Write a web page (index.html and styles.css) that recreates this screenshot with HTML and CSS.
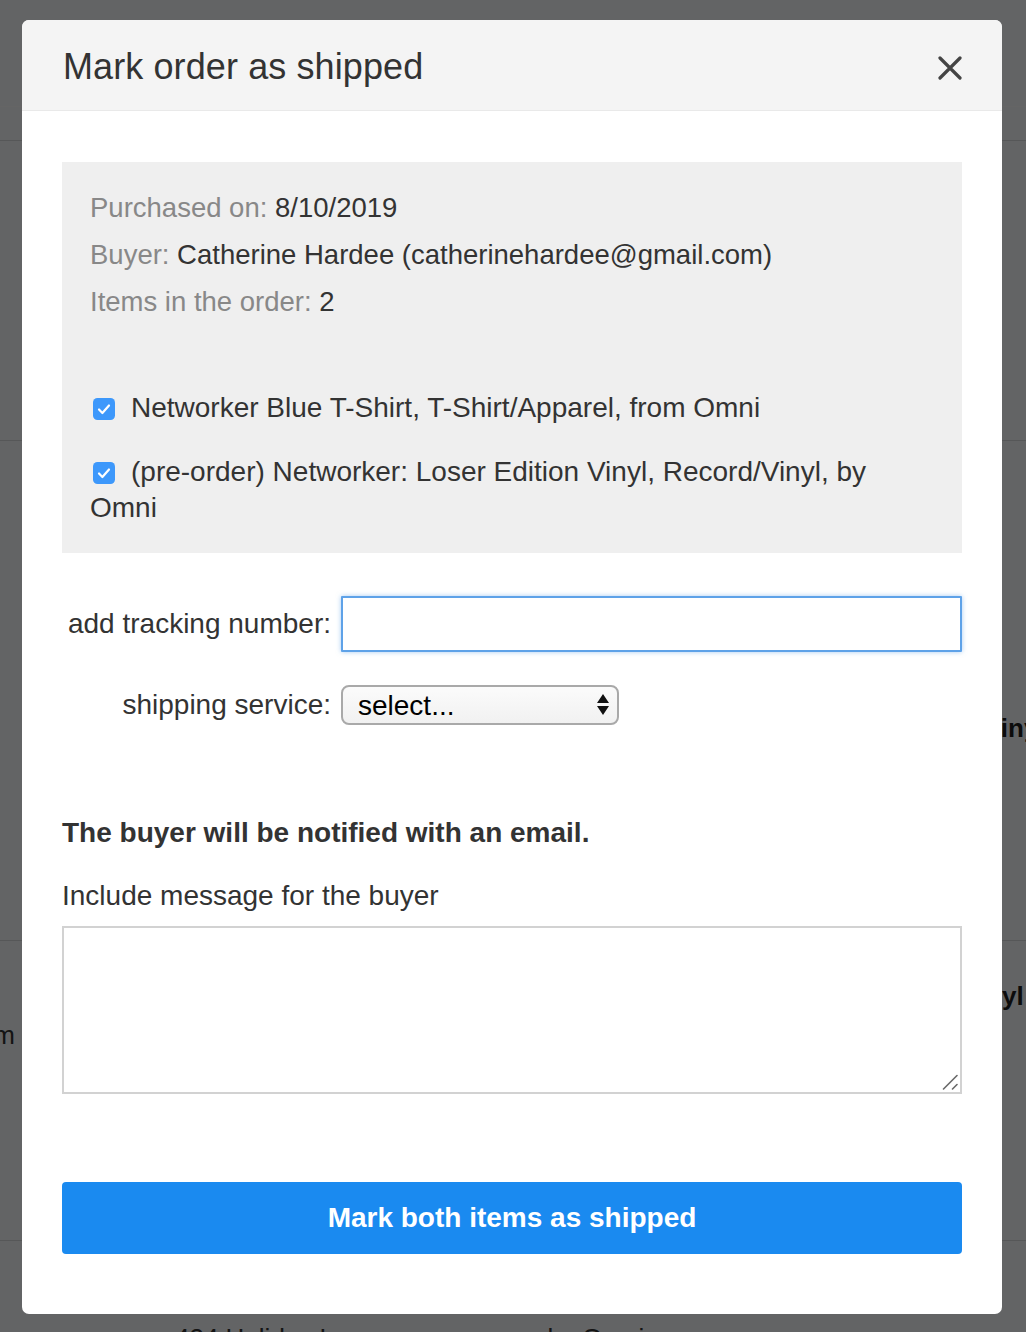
FILE: index.html
```html
<!DOCTYPE html>
<html lang="en">
<head>
<meta charset="utf-8">
<title>Mark order as shipped</title>
<link rel="stylesheet" href="styles.css">
</head>
<body>
<div class="page">
  <div class="page-top"></div>
  <div class="page-sub"></div>
  <div class="page-row r1"></div>
  <div class="page-row r2"><span class="bg-text bold vinyl1">Vinyl</span></div>
  <div class="page-row r3">
    <div class="bg-left"><span class="bg-text">from</span></div>
    <span class="bg-text bold vinyl2">Vinyl</span>
  </div>
  <div class="page-row r4"><span class="bg-text addr">434 Holiday Lane</span><span class="bg-text by">by Omni</span></div>
</div>
<div class="overlay"></div>

<div class="modal">
  <div class="modal-header">
    <h1 class="modal-title">Mark order as shipped</h1>
    <button class="close" aria-label="Close">
      <svg width="24" height="24" viewBox="0 0 24 24"><path d="M2 2 L22 22 M22 2 L2 22" stroke="#444" stroke-width="3.2" stroke-linecap="round"/></svg>
    </button>
  </div>
  <div class="modal-body">
    <div class="info">
      <p class="info-line"><span class="lbl">Purchased on:</span> 8/10/2019</p>
      <p class="info-line"><span class="lbl">Buyer:</span> Catherine Hardee (catherinehardee@gmail.com)</p>
      <p class="info-line"><span class="lbl">Items in the order:</span> 2</p>
      <div class="items">
        <p class="item"><span class="cb"><svg width="22" height="22" viewBox="0 0 22 22"><rect x="0" y="0" width="22" height="22" rx="4.5" fill="#3d98fb"/><path d="M6 11.5 L9.4 15 L16 7.5" fill="none" stroke="#fff" stroke-width="2.2" stroke-linecap="round" stroke-linejoin="round"/></svg></span>Networker Blue T-Shirt, T-Shirt/Apparel, from Omni</p>
        <p class="item"><span class="cb"><svg width="22" height="22" viewBox="0 0 22 22"><rect x="0" y="0" width="22" height="22" rx="4.5" fill="#3d98fb"/><path d="M6 11.5 L9.4 15 L16 7.5" fill="none" stroke="#fff" stroke-width="2.2" stroke-linecap="round" stroke-linejoin="round"/></svg></span>(pre-order) Networker: Loser Edition Vinyl, Record/Vinyl, by Omni</p>
      </div>
    </div>

    <div class="form-grid">
      <label class="form-label" for="tracking">add tracking number:</label>
      <input class="tracking" id="tracking" type="text">
      <label class="form-label" for="service">shipping service:</label>
      <div class="select-wrap">
        <select class="service" id="service"><option>select...</option></select>
        <svg class="arrows" width="12" height="24" viewBox="0 0 12 24"><path d="M6 1 L12 10 L0 10 Z M0 13 L12 13 L6 22 Z" fill="#111"/></svg>
      </div>
    </div>

    <p class="notice">The buyer will be notified with an email.</p>
    <label class="msg-label" for="msg">Include message for the buyer</label>
    <div class="msg-wrap">
      <textarea class="msg" id="msg"></textarea>
      <svg class="grip" width="16" height="16" viewBox="0 0 16 16"><path d="M1.5 15 L15 1.5 M10.5 15 L15 10.5" stroke="#6a6a6a" stroke-width="1.6" stroke-linecap="round"/></svg>
    </div>

    <button class="submit">Mark both items as shipped</button>
  </div>
</div>
</body>
</html>
```

FILE: styles.css
```css
html, body {
  margin: 0;
  padding: 0;
}
body {
  width: 1026px;
  height: 1332px;
  overflow: hidden;
  position: relative;
  font-family: "Liberation Sans", Arial, Helvetica, sans-serif;
  background: #f8fbfd;
}

/* background page */
.page {
  width: 1026px;
  height: 1332px;
  overflow: hidden;
  color: #333;
  font-size: 26px;
}
.page-top {
  height: 106px;
  border-bottom: 1px solid #fdfdfd;
}
.page-sub {
  height: 33px;
  border-bottom: 1px solid #d8dadc;
}
.page-row {
  border-bottom: 1px solid #d8dadc;
  display: flex;
}
.r1 { height: 299px; }
.r2 { height: 499px; }
.r3 { height: 299px; }
.r4 { height: 100px; border-bottom: none; }
.bg-text {
  white-space: nowrap;
  line-height: 30px;
}
.bold { font-weight: bold; color: #1e1e1e; }
.vinyl1 { margin: 272px 0 0 984px; }
.vinyl2 { margin: 40px 0 0 947px; }
.bg-left {
  width: 15px;
  display: flex;
  justify-content: flex-end;
  margin-top: 79px;
  height: 30px;
}
.addr { margin: 82px 0 0 175px; }
.by { margin: 82px 0 0 170px; }

.overlay {
  position: absolute;
  inset: 0;
  background: rgba(0, 0, 0, 0.6);
}

/* modal */
.modal {
  position: absolute;
  top: 20px;
  left: 22px;
  width: 980px;
  height: 1294px;
  background: #fff;
  border-radius: 7px;
  overflow: hidden;
  display: flex;
  flex-direction: column;
  color: #333;
}
.modal-header {
  height: 90px;
  background: #f4f4f4;
  border-bottom: 1px solid #e9e9e9;
  display: flex;
  align-items: center;
  justify-content: space-between;
  padding: 0 40px 0 41px;
  flex-shrink: 0;
}
.modal-title {
  margin: 0;
  font-size: 36px;
  font-weight: normal;
  color: #333;
  letter-spacing: 0.1px;
  padding-top: 4px;
}
.close {
  border: 0;
  background: none;
  padding: 0;
  width: 24px;
  height: 24px;
  display: flex;
  margin-top: 6px;
}
.modal-body {
  padding: 51px 40px 60px 40px;
  display: flex;
  flex-direction: column;
}

.info {
  background: #efefef;
  padding: 28px 28px 27px 28px;
  font-size: 27.5px;
  line-height: 36px;
  height: 391px;
  box-sizing: border-box;
}
.info-line {
  margin: 0 0 11px 0;
  color: #333;
}
.lbl { color: #888; }
.items {
  margin-top: 70px;
  font-size: 28px;
}
.item {
  margin: 0 0 28px 0;
  color: #333;
}
.item:last-child { margin-bottom: 0; }
.cb {
  display: inline-block;
  width: 22px;
  height: 22px;
  margin: 0 16px 0 3px;
  vertical-align: -3px;
}
.cb svg { display: block; }

.form-grid {
  margin-top: 43px;
  display: grid;
  grid-template-columns: 269px 1fr;
  column-gap: 10px;
  row-gap: 33px;
  align-items: center;
  font-size: 28px;
}
.form-label {
  text-align: right;
  color: #333;
  white-space: nowrap;
}
.tracking {
  height: 56px;
  box-sizing: border-box;
  border: 2px solid #5ea2e8;
  box-shadow: 0 0 5px rgba(94, 162, 232, 0.55);
  border-radius: 1px;
  outline: none;
  font-size: 26px;
  padding: 0 10px;
  margin: 0;
}
.select-wrap {
  position: relative;
  width: 278px;
  height: 40px;
}
.service {
  appearance: none;
  -webkit-appearance: none;
  width: 278px;
  height: 40px;
  box-sizing: border-box;
  border: 2px solid #a9a9a9;
  border-radius: 8px;
  background: linear-gradient(#fbfbfb, #f1f1f1);
  font-family: "Liberation Sans", Arial, sans-serif;
  font-size: 28px;
  color: #000;
  padding: 0 0 0 15px;
  margin: 0;
}
.arrows {
  position: absolute;
  right: 10px;
  top: 8px;
  pointer-events: none;
}

.notice {
  margin: 90px 0 0 0;
  font-size: 28px;
  line-height: 36px;
  font-weight: bold;
  color: #333;
}
.msg-label {
  margin-top: 27px;
  font-size: 28px;
  line-height: 36px;
  color: #333;
}
.msg-wrap {
  margin-top: 12px;
  position: relative;
  height: 168px;
}
.msg {
  display: block;
  height: 168px;
  width: 900px;
  box-sizing: border-box;
  border: 2px solid #d2d2d2;
  border-radius: 0;
  resize: none;
  font-size: 22px;
  padding: 6px;
  margin: 0;
}
.grip {
  position: absolute;
  right: 4px;
  bottom: 4px;
  pointer-events: none;
}
.submit {
  margin-top: 88px;
  height: 72px;
  border: 0;
  border-radius: 4px;
  background: #1a8af0;
  color: #fff;
  font-family: "Liberation Sans", Arial, sans-serif;
  font-size: 28px;
  font-weight: bold;
  width: 900px;
}
```
